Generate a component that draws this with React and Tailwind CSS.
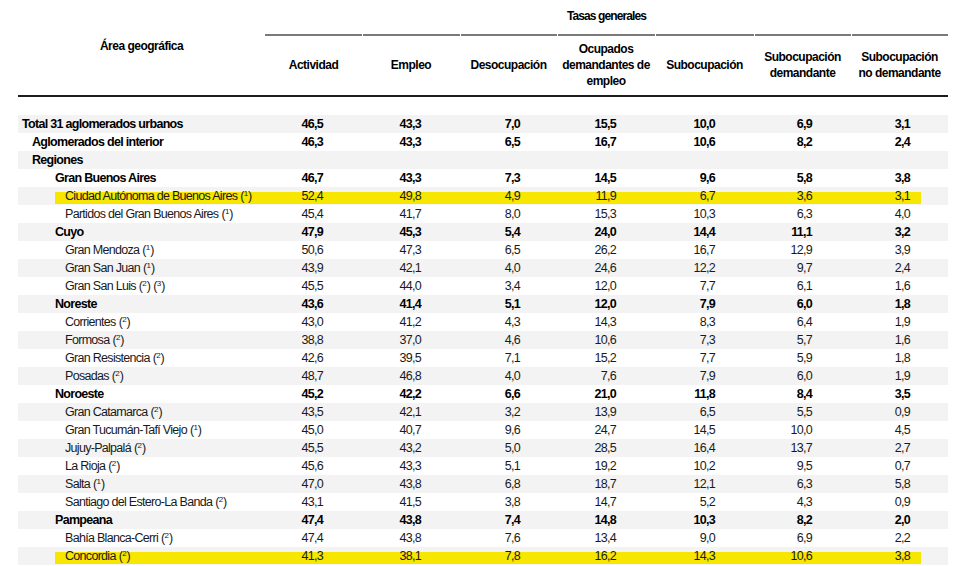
const cols = [
  { label: ['Actividad'], w: 'w-[97px]' },
  { label: ['Empleo'], w: 'w-[98px]' },
  { label: ['Desocupación'], w: 'w-[97px]' },
  { label: ['Ocupados', 'demandantes de', 'empleo'], w: 'w-[98px]' },
  { label: ['Subocupación'], w: 'w-[99px]' },
  { label: ['Subocupación', 'demandante'], w: 'w-[97px]' },
  { label: ['Subocupación', 'no demandante'], w: 'w-[97px]' },
];

// right padding of the numbers in each column
const pads = ['pr-[39px]', 'pr-[39px]', 'pr-[37px]', 'pr-[39px]', 'pr-[39px]', 'pr-[39px]', 'pr-[38px]'];

const indent = ['pl-[4px]', 'pl-[14px]', 'pl-[37px]', 'pl-[47px]'];

const rows = [
  { name: 'Total 31 aglomerados urbanos', lvl: 0, bold: true, v: ['46,5', '43,3', '7,0', '15,5', '10,0', '6,9', '3,1'] },
  { name: 'Aglomerados del interior', lvl: 1, bold: true, v: ['46,3', '43,3', '6,5', '16,7', '10,6', '8,2', '2,4'] },
  { name: 'Regiones', lvl: 1, bold: true, v: null },
  { name: 'Gran Buenos Aires', lvl: 2, bold: true, v: ['46,7', '43,3', '7,3', '14,5', '9,6', '5,8', '3,8'] },
  { name: 'Ciudad Autónoma de Buenos Aires', lvl: 3, notes: ['1'], hl: true, v: ['52,4', '49,8', '4,9', '11,9', '6,7', '3,6', '3,1'] },
  { name: 'Partidos del Gran Buenos Aires', lvl: 3, notes: ['1'], v: ['45,4', '41,7', '8,0', '15,3', '10,3', '6,3', '4,0'] },
  { name: 'Cuyo', lvl: 2, bold: true, v: ['47,9', '45,3', '5,4', '24,0', '14,4', '11,1', '3,2'] },
  { name: 'Gran Mendoza', lvl: 3, notes: ['1'], v: ['50,6', '47,3', '6,5', '26,2', '16,7', '12,9', '3,9'] },
  { name: 'Gran San Juan', lvl: 3, notes: ['1'], v: ['43,9', '42,1', '4,0', '24,6', '12,2', '9,7', '2,4'] },
  { name: 'Gran San Luis', lvl: 3, notes: ['2', '3'], v: ['45,5', '44,0', '3,4', '12,0', '7,7', '6,1', '1,6'] },
  { name: 'Noreste', lvl: 2, bold: true, v: ['43,6', '41,4', '5,1', '12,0', '7,9', '6,0', '1,8'] },
  { name: 'Corrientes', lvl: 3, notes: ['2'], v: ['43,0', '41,2', '4,3', '14,3', '8,3', '6,4', '1,9'] },
  { name: 'Formosa', lvl: 3, notes: ['2'], v: ['38,8', '37,0', '4,6', '10,6', '7,3', '5,7', '1,6'] },
  { name: 'Gran Resistencia', lvl: 3, notes: ['2'], v: ['42,6', '39,5', '7,1', '15,2', '7,7', '5,9', '1,8'] },
  { name: 'Posadas', lvl: 3, notes: ['2'], v: ['48,7', '46,8', '4,0', '7,6', '7,9', '6,0', '1,9'] },
  { name: 'Noroeste', lvl: 2, bold: true, v: ['45,2', '42,2', '6,6', '21,0', '11,8', '8,4', '3,5'] },
  { name: 'Gran Catamarca', lvl: 3, notes: ['2'], v: ['43,5', '42,1', '3,2', '13,9', '6,5', '5,5', '0,9'] },
  { name: 'Gran Tucumán-Tafí Viejo', lvl: 3, notes: ['1'], v: ['45,0', '40,7', '9,6', '24,7', '14,5', '10,0', '4,5'] },
  { name: 'Jujuy-Palpalá', lvl: 3, notes: ['2'], v: ['45,5', '43,2', '5,0', '28,5', '16,4', '13,7', '2,7'] },
  { name: 'La Rioja', lvl: 3, notes: ['2'], v: ['45,6', '43,3', '5,1', '19,2', '10,2', '9,5', '0,7'] },
  { name: 'Salta', lvl: 3, notes: ['1'], v: ['47,0', '43,8', '6,8', '18,7', '12,1', '6,3', '5,8'] },
  { name: 'Santiago del Estero-La Banda', lvl: 3, notes: ['2'], v: ['43,1', '41,5', '3,8', '14,7', '5,2', '4,3', '0,9'] },
  { name: 'Pampeana', lvl: 2, bold: true, v: ['47,4', '43,8', '7,4', '14,8', '10,3', '8,2', '2,0'] },
  { name: 'Bahía Blanca-Cerri', lvl: 3, notes: ['2'], v: ['47,4', '43,8', '7,6', '13,4', '9,0', '6,9', '2,2'] },
  { name: 'Concordia', lvl: 3, notes: ['2'], hl: true, v: ['41,3', '38,1', '7,8', '16,2', '14,3', '10,6', '3,8'] },
];

const Note = ({ n }) => (
  <span className="ml-[3px]">
    (<span className="relative -top-[4px] text-[8px] tracking-normal">{n}</span>)
  </span>
);

const Row = ({ row, i }) => {
  const weight = row.bold ? 'font-bold text-black' : 'text-[#1a1a1a]';
  return (
    <div className={`relative flex h-[18px] items-center pt-[1px] ${i % 2 === 0 ? 'bg-[#f3f3f3]' : 'bg-white'}`}>
      {/* highlighter mark */}
      {row.hl && <span className="absolute left-[37px] right-[27px] top-[5px] bottom-[1px] bg-[#f6e600]" />}
      <div className={`relative w-[247px] whitespace-nowrap ${indent[row.lvl]} ${weight}`}>
        {row.name}
        {row.notes && row.notes.map((n) => <Note key={n} n={n} />)}
      </div>
      {cols.map((c, j) => (
        <div key={j} className={`relative ${c.w} text-right ${pads[j]} ${weight}`}>
          {row.v ? row.v[j] : ''}
        </div>
      ))}
    </div>
  );
};

export default function App() {
  return (
    <div className="w-[958px] h-[566px] overflow-hidden bg-white pl-[18px] font-['Liberation_Sans',Arial,sans-serif] text-[12px] tracking-[-0.5px] leading-none">
      <div className="w-[930px]">
        {/* header */}
        <div className="flex">
          <div className="w-[247px] h-[95px] flex items-center justify-center font-bold text-black pb-[3px]">
            Área geográfica
          </div>
          <div className="flex-1 flex flex-col">
            <div className="h-[34px] flex items-center justify-center font-bold text-black tracking-[-0.9px] pb-[2px]">
              Tasas generales
            </div>
            <div className="flex h-[61px]">
              {cols.map((c, j) => (
                <div key={j} className={`${c.w} flex flex-col`}>
                  <div className={`h-[2px] bg-[#7a7a7a] ${j > 0 ? 'ml-px' : ''}`} />
                  <div className="flex-1 flex flex-col items-center justify-center font-bold text-black leading-[16px] text-center whitespace-nowrap pb-[2px]">
                    {c.label.map((l) => (
                      <div key={l}>{l}</div>
                    ))}
                  </div>
                </div>
              ))}
            </div>
          </div>
        </div>
        <div className="h-[2px] bg-[#1c1c1c]" />
        <div className="h-[18px]" />
        {/* body */}
        <div className="text-[12.5px] tracking-[-0.7px]">
          {rows.map((r, i) => (
            <Row key={r.name} row={r} i={i} />
          ))}
        </div>
      </div>
    </div>
  );
}
